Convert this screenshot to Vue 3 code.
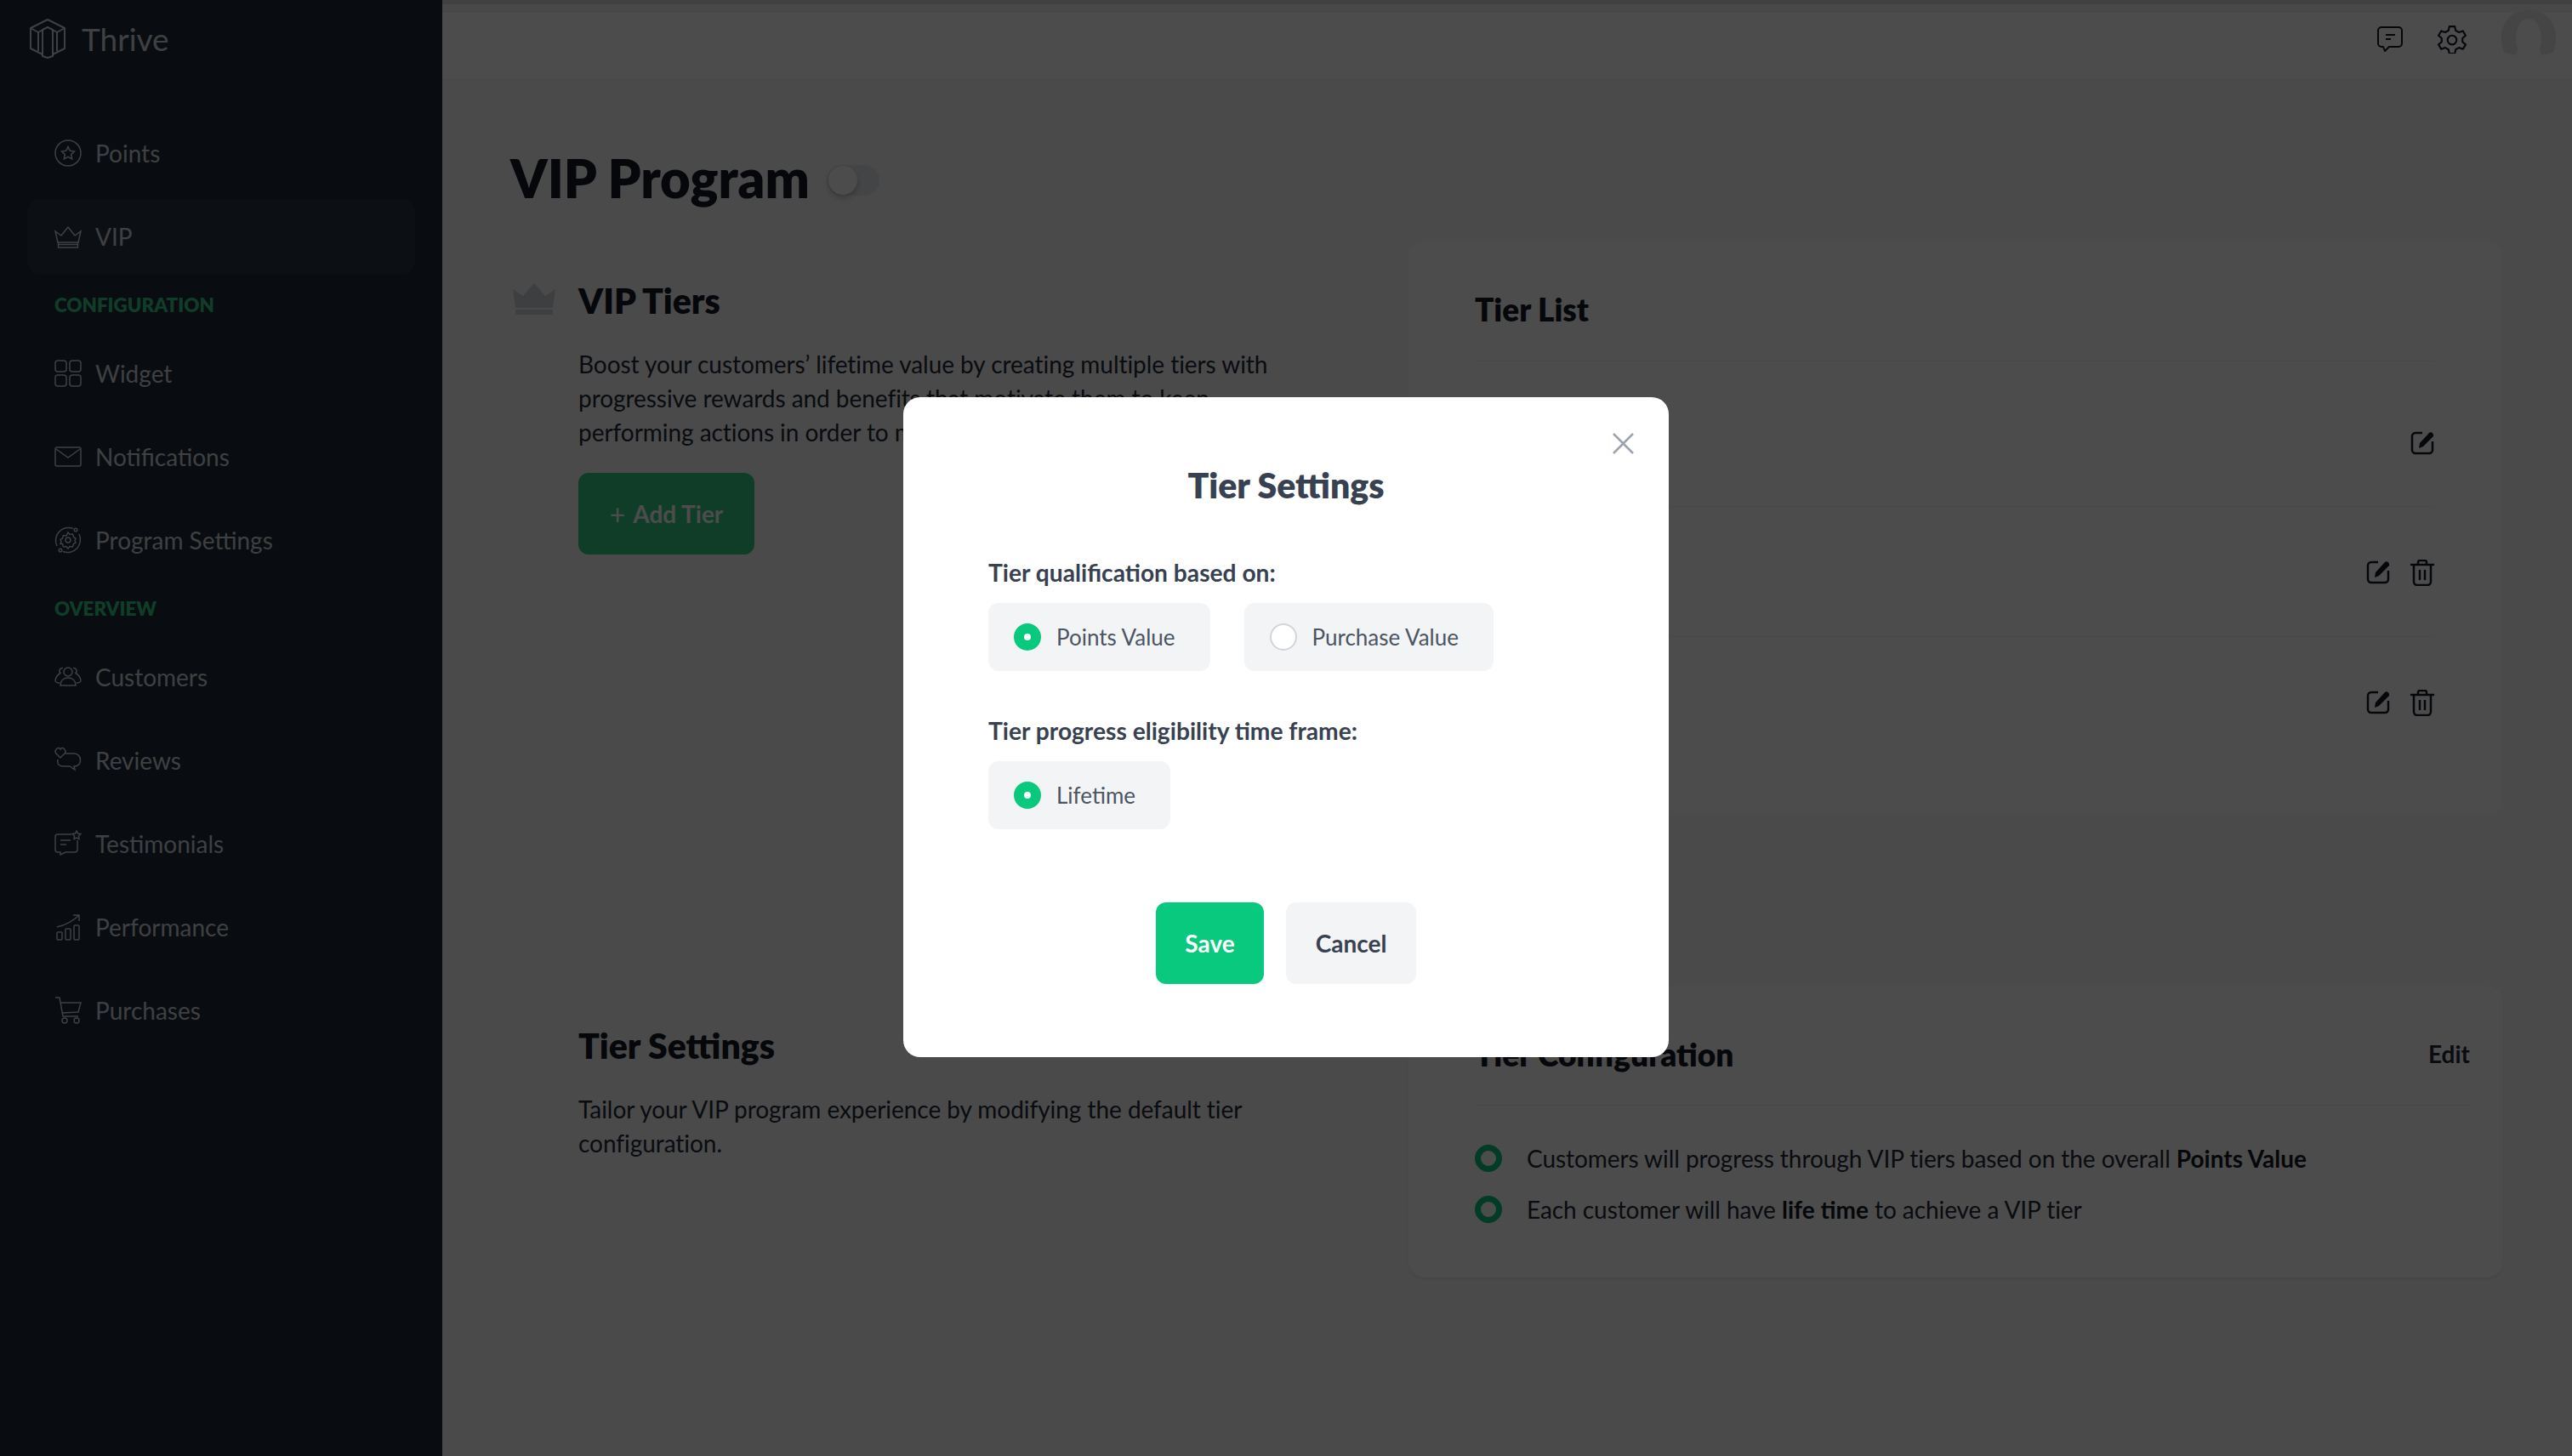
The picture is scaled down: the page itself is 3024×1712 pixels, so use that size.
<script setup>
const tiers = [{ id: 1, canDelete: false }, { id: 2, canDelete: true }, { id: 3, canDelete: true }]
</script>

<template>
  <div class="app">
    <aside class="sidebar">
      <div class="brand">
        <svg class="logo" viewBox="0 0 42 47" fill="none" stroke="currentColor" stroke-width="2" stroke-linejoin="round">
          <path d="M21 1 41 11V35L27 42V44L21 46 15 44V42L1 35V11Z" />
          <path d="M1 11 10 16 15 13V42M41 11 32 16 27 13V42M10 16V38M32 16V38M15 13 21 10 27 13" />
        </svg>
        <span>Thrive</span>
      </div>

      <nav class="nav">
        <a class="nav-item">
          <svg viewBox="0 0 32 32"><circle cx="16" cy="16" r="15" /><path d="M16 8.500l2.300 4.800 5.200.7-3.800 3.600 1 5.200-4.700-2.500-4.700 2.500 1-5.200-3.800-3.600 5.200-.7z" /></svg>
          Points
        </a>
        <a class="nav-item active">
          <svg viewBox="0 0 32 32"><path d="M1 10l7 5 8-10 8 10 7-5-3 13H4zM4.500 23v6h23v-6M5 25.500h22" /></svg>
          VIP
        </a>
        <div class="nav-label">CONFIGURATION</div>
        <a class="nav-item">
          <svg viewBox="0 0 32 32"><rect x="1" y="1" width="13" height="13" rx="3" /><rect x="18" y="1" width="13" height="13" rx="3" /><rect x="1" y="18" width="13" height="13" rx="3" /><rect x="18" y="18" width="13" height="13" rx="3" /></svg>
          Widget
        </a>
        <a class="nav-item">
          <svg viewBox="0 0 32 32"><rect x="1" y="5" width="30" height="22" rx="2" /><path d="M2 7l14 10L30 7" /></svg>
          Notifications
        </a>
        <a class="nav-item">
          <svg viewBox="0 0 32 32"><path d="M3 23A15 15 0 0 1 22 2.500M29 9A15 15 0 0 1 10 29.500" /><circle cx="25" cy="4" r="1.800" /><circle cx="7" cy="28" r="1.800" /><circle cx="16" cy="16" r="3" /><path d="M16 7l2 2.500 3.500-.5 1 3.500 2.500 1.500-1 2.500 1 2.500-2.500 1.500-1 3.500-3.500-.5-2 2.500-2-2.500-3.500.5-1-3.500L7 20.500l1-2.500-1-2.500 2.500-1.500 1-3.500 3.500.5z" /></svg>
          Program Settings
        </a>
        <div class="nav-label">OVERVIEW</div>
        <a class="nav-item">
          <svg viewBox="0 0 32 32"><circle cx="16" cy="10" r="5" /><path d="M7 26c0-6 4-9 9-9s9 3 9 9zM10 5.500a3.500 3.500 0 0 0-3 6C4 13 1 17 1 20c0 1.500 2 3 5 3M22 5.500a3.500 3.500 0 0 1 3 6c3 1.500 6 5.500 6 8.500 0 1.500-2 3-5 3" /></svg>
          Customers
        </a>
        <a class="nav-item">
          <svg viewBox="0 0 32 32"><path d="M7 13L2 8C-1 4 5-1 7 3c2-4 8 1 5 5zM13 8h10c10 0 10 16 0 15l1 4-6-4h-8c-5 0-7-3-6-8" /><path d="M13 15.500h.1M18 15.500h.1M23 15.500h.1" stroke-width="2" /></svg>
          Reviews
        </a>
        <a class="nav-item">
          <svg viewBox="0 0 32 32"><path d="M20 5H4C2 5 1 6 1 8v15c0 2 1 3 3 3h3v3l6-3h11c2 0 3-1 3-3V12M7 12h12M7 17h7" /><path d="M26 1l1.500 3 3.500.5-2.500 2.500.5 3.500-3-1.500-3 1.500.5-3.500L21 4.500l3.500-.5z" /></svg>
          Testimonials
        </a>
        <a class="nav-item">
          <svg viewBox="0 0 32 32"><path d="M3 16C12 14 22 9 29 2M22 2h7v7" /><rect x="3" y="22" width="6" height="9" rx="1" /><rect x="13" y="18" width="6" height="13" rx="1" /><rect x="23" y="14" width="6" height="17" rx="1" /></svg>
          Performance
        </a>
        <a class="nav-item">
          <svg viewBox="0 0 32 32"><path d="M1 1h5l4 22h18M7.500 7H31l-3 11-19 1" /><circle cx="12" cy="28" r="3" /><circle cx="26" cy="28" r="3" /></svg>
          Purchases
        </a>
      </nav>
    </aside>

    <div class="main">
      <header class="topbar">
        <svg class="top-icon" viewBox="0 0 32 32"><path d="M6 2h20a4 4 0 0 1 4 4v15a4 4 0 0 1-4 4H15l-5 5-2-5H6a4 4 0 0 1-4-4V6a4 4 0 0 1 4-4zM11 11h11M11 16h6" /></svg>
        <svg class="top-icon gear" viewBox="0 0 32 32"><circle cx="16" cy="17" r="5" /><path d="M13 2h6l1 4.500 3.500 2 4.500-1.500 3 5-3.500 3v4l3.500 3-3 5-4.500-1.500-3.500 2L19 32h-6l-1-4.500-3.500-2L4 27l-3-5 3.500-3v-4L1 12l3-5 4.500 1.500 3.500-2z" /></svg>
        <svg class="avatar" viewBox="0 0 67 53"><path d="M4 50C-6 22 8 0 33 0s39 22 29 50l-14 3c-2-5-3-8-1-11C50 25 44 10 33 10S16 25 19 42c2 3 1 6-1 11z" /></svg>
      </header>

      <div class="content">
        <div class="page-title">
          <h1>VIP Program</h1>
          <span class="toggle"><span class="knob"></span></span>
        </div>

        <div class="grid">
          <section class="info">
            <svg class="crown" viewBox="0 0 50 37"><path d="M0 7l12 8L25 0l13 15 12-8-3 22H3zM3 31h44v6H3z" /></svg>
            <h2>VIP Tiers</h2>
            <p>Boost your customers’ lifetime value by creating multiple tiers with progressive rewards and benefits that motivate them to keep performing actions in order to maintain or unlock a higher tier.</p>
            <button class="add-btn"><span class="plus">+</span>Add Tier</button>
          </section>

          <section class="card list-card">
            <h3>Tier List</h3>
            <div v-for="tier in tiers" :key="tier.id" class="tier-row">
              <svg class="row-icon" viewBox="0 0 28 28"><path d="M14 2H6a4 4 0 0 0-4 4v16a4 4 0 0 0 4 4h16a4 4 0 0 0 4-4V12" /><path class="pen" d="M11 14 22 2c2-2 6 1 5 4L15 18l-5 2z" /></svg>
              <svg v-if="tier.canDelete" class="row-icon trash" viewBox="0 0 28 31"><path d="M0 6h28M9 6V3a2 2 0 0 1 2-2h6a2 2 0 0 1 2 2v3M4 6v20a4 4 0 0 0 4 4h12a4 4 0 0 0 4-4V6M11 12v12M17 12v12" /></svg>
            </div>
          </section>

          <section class="info settings-info">
            <h2>Tier Settings</h2>
            <p>Tailor your VIP program experience by modifying the default tier configuration.</p>
          </section>

          <section class="card config-card">
            <div class="config-head">
              <h3>Tier Configuration</h3>
              <span class="edit">Edit</span>
            </div>
            <ul class="config-list">
              <li><i class="ring"></i><span>Customers will progress through VIP tiers based on the overall <b>Points Value</b></span></li>
              <li><i class="ring"></i><span>Each customer will have <b>life time</b> to achieve a VIP tier</span></li>
            </ul>
          </section>
        </div>
      </div>
    </div>

    <div class="overlay">
      <div class="modal">
        <svg class="close" viewBox="0 0 25 25"><path d="M1 1l23 23M24 1L1 24" /></svg>
        <h2 class="modal-title">Tier Settings</h2>

        <div class="field-label">Tier qualification based on:</div>
        <div class="options">
          <label class="option"><i class="radio on"></i>Points Value</label>
          <label class="option"><i class="radio"></i>Purchase Value</label>
        </div>

        <div class="field-label second">Tier progress eligibility time frame:</div>
        <div class="options">
          <label class="option"><i class="radio on"></i>Lifetime</label>
        </div>

        <div class="actions">
          <button class="save">Save</button>
          <button class="cancel">Cancel</button>
        </div>
      </div>
    </div>
  </div>
</template>

<style>
html, body {
  margin: 0;
  background: #f7f7f7;
}
</style>

<style scoped>
.app {
  display: flex;
  width: 3024px;
  height: 1712px;
  overflow: hidden;
  font-family: Lato, "Liberation Sans", sans-serif;
  color: #1f2937;
}

.sidebar {
  width: 520px;
  flex-shrink: 0;
  background: #1f2937;
  color: #d1d5db;
  box-sizing: border-box;
  padding: 0 32px;
}

.brand {
  display: flex;
  align-items: center;
  gap: 19px;
  height: 136px;
  padding: 0 0 46px 3px;
  box-sizing: border-box;
  font-size: 37px;
}

.logo {
  width: 42px;
  height: 47px;
}

.nav {
  display: flex;
  flex-direction: column;
  gap: 10px;
}

.nav-item {
  display: flex;
  align-items: center;
  gap: 16px;
  height: 88px;
  padding: 0 32px;
  border-radius: 16px;
  font-size: 28px;
}

.nav-item svg {
  width: 32px;
  height: 32px;
  flex-shrink: 0;
  fill: none;
  stroke: currentColor;
  stroke-width: 1.500;
}

.nav-item.active {
  background: #2b3543;
}

.nav-label {
  height: 53px;
  line-height: 53px;
  padding-left: 32px;
  font-size: 22.400px;
  font-weight: 800;
  color: #33cc88;
}

.main {
  flex: 1;
  min-width: 0;
}

.topbar {
  display: flex;
  align-items: center;
  justify-content: flex-end;
  height: 93px;
  padding-right: 17px;
  box-sizing: border-box;
  background: linear-gradient(#d8dadc 0 5px, #f0f1f2 5px 15px, #fff 15px);
  border-bottom: 1px solid #f1f1f1;
}

.top-icon {
  width: 32px;
  height: 32px;
  margin-right: 40px;
  fill: none;
  stroke: #111827;
  stroke-width: 2;
  stroke-linejoin: round;
}

.top-icon.gear {
  width: 34px;
  height: 34px;
}

.avatar {
  width: 67px;
  height: 53px;
  fill: #e8e8e8;
  margin-top: -15px;
}

.content {
  padding: 80px 81px 0 80px;
}

.page-title {
  display: flex;
  align-items: center;
  gap: 20px;
  height: 72px;
  margin-bottom: 38px;
}

h1 {
  margin: 0;
  font-size: 61.500px;
  font-weight: 800;
  color: #111827;
}

.toggle {
  position: relative;
  display: block;
  width: 62px;
  height: 36px;
  margin-top: 6px;
  border-radius: 18px;
  background: #e5e7eb;
}

.knob {
  position: absolute;
  left: 2px;
  top: 1px;
  width: 34px;
  height: 34px;
  border-radius: 50%;
  background: #fff;
  box-shadow: 0 4px 6px rgba(0, 0, 0, 0.2);
}

.grid {
  display: grid;
  grid-template-columns: 976px 1fr;
  column-gap: 80px;
  row-gap: 200px;
}

.info {
  position: relative;
  padding: 50px 0 0 80px;
}

.crown {
  position: absolute;
  left: 3px;
  top: 50px;
  width: 50px;
  height: 37px;
  fill: #d0d3d8;
}

.info h2 {
  margin: 0;
  font-size: 41px;
  font-weight: 800;
  line-height: 42px;
  color: #111827;
}

.info p {
  width: 840px;
  margin: 33px 0 0;
  font-size: 28px;
  line-height: 40px;
  letter-spacing: -0.05px;
  color: #1f2937;
}

.add-btn {
  display: flex;
  align-items: center;
  justify-content: center;
  gap: 9px;
  width: 207px;
  height: 96px;
  margin-top: 28px;
  border: 0;
  border-radius: 12px;
  background: #33cc88;
  color: #fff;
  font: 700 28px Lato, sans-serif;
}

.plus {
  font-size: 32px;
  font-weight: 400;
}

.card {
  box-sizing: border-box;
  background: #fff;
  border-radius: 20px;
}

.list-card {
  height: 676px;
  padding: 0 81px 0 78px;
}

.list-card h3 {
  height: 141px;
  line-height: 162px;
  border-bottom: 1px solid #f1f1f1;
}

h3 {
  margin: 0;
  font-size: 37px;
  font-weight: 800;
  color: #111827;
}

.tier-row {
  display: flex;
  align-items: center;
  justify-content: flex-end;
  gap: 24px;
  height: 152px;
  border-bottom: 1px solid #f1f1f1;
}

.tier-row:first-of-type {
  height: 171px;
  padding-top: 20px;
  box-sizing: border-box;
}

.tier-row:last-child {
  border-bottom: 0;
}

.row-icon {
  width: 28px;
  height: 28px;
  margin-top: 2px;
  fill: none;
  stroke: #111827;
  stroke-width: 2.500;
}

.row-icon.trash {
  height: 31px;
}

.row-icon .pen {
  fill: #111827;
  stroke: none;
}

.config-card {
  height: 343px;
  padding: 0 39px 0 78px;
  box-shadow: 0 3px 3px rgba(0, 0, 0, 0.05);
}

.config-head {
  display: flex;
  align-items: center;
  justify-content: space-between;
  height: 141px;
  padding-top: 20px;
  box-sizing: border-box;
  border-bottom: 1px solid #f1f1f1;
}

.edit {
  font-size: 28px;
  font-weight: 700;
  color: #1f2937;
}

.config-list {
  list-style: none;
  margin: 0;
  padding: 46px 0 0;
  display: flex;
  flex-direction: column;
  gap: 28px;
}

.config-list li {
  display: flex;
  align-items: center;
  gap: 29px;
  height: 32px;
  font-size: 28px;
  letter-spacing: -0.06px;
}

.ring {
  box-sizing: border-box;
  width: 32px;
  height: 32px;
  border: 7px solid #0bc97f;
  border-radius: 50%;
}

.config-list b {
  font-weight: 700;
  letter-spacing: 0;
  color: #111827;
}

.overlay {
  position: fixed;
  inset: 0;
  display: flex;
  align-items: center;
  justify-content: center;
  background: rgba(0, 0, 0, 0.7);
}

.modal {
  position: relative;
  box-sizing: border-box;
  width: 900px;
  height: 776px;
  margin-bottom: 2px;
  padding: 80px 100px 0;
  background: #fff;
  border-radius: 20px;
}

.close {
  position: absolute;
  top: 42px;
  right: 41px;
  width: 25px;
  height: 25px;
  fill: none;
  stroke: #9ca3af;
  stroke-width: 2.500;
}

.modal-title {
  margin: 0;
  text-align: center;
  font-size: 41px;
  line-height: 48px;
  font-weight: 800;
  color: #374151;
}

.field-label {
  margin: 58px 0 16px;
  font-size: 28.200px;
  line-height: 40px;
  font-weight: 700;
  color: #374151;
}

.field-label.second {
  margin-top: 50px;
}

.options {
  display: flex;
  gap: 40px;
}

.option {
  display: flex;
  align-items: center;
  gap: 18px;
  height: 80px;
  padding: 0 41px 0 30px;
  border-radius: 12px;
  background: #f3f4f6;
  font-size: 26px;
  color: #4b5563;
}

.radio {
  box-sizing: border-box;
  width: 32px;
  height: 32px;
  border: 2px solid #d1d5db;
  border-radius: 50%;
  background: #fff;
}

.radio.on {
  border: 12px solid #08c97d;
}

.actions {
  display: flex;
  justify-content: center;
  gap: 26px;
  margin-top: 86px;
}

.actions button {
  height: 96px;
  border: 0;
  border-radius: 12px;
  font: 700 28px Lato, sans-serif;
}

.save {
  width: 127px;
  background: #08c97d;
  color: #fff;
}

.cancel {
  width: 153px;
  background: #f3f4f6;
  color: #374151;
}
</style>
